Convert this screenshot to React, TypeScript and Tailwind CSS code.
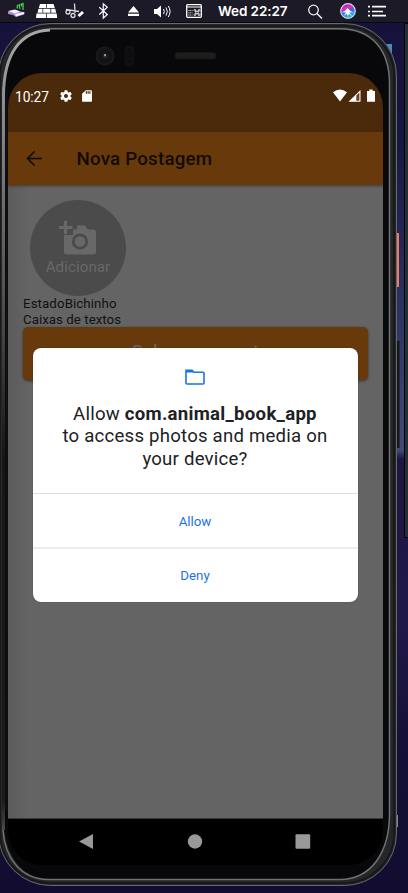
import React from "react";

function MenuBar() {
  return (
    <header className="relative h-[23px] w-full shrink-0 border-b border-[#09070f] bg-[#1c1a27]">
      <svg className="absolute inset-0" width="408" height="22" viewBox="0 0 408 22" fill="none">
        <path d="M8 11.500l7-1.500 10 2.500-1 2-8 2.500-3-2-5-1z" fill="#a58ad6" />
        <path d="M8 11l7-1.500 5 2-5 2z" fill="#f6f2ff" />
        <path d="M15 14l9-2v2l-8 2.500z" fill="#f6f0ff" />
        <path d="M17.500 8.500q-1-3 1-3.500M20 9q-1.500-4 .5-5M23 10V3.500q-2 0-1.500 3" stroke="#3bd34e" strokeWidth="1.300" />
        <path d="M40 4h6.300v4h-7.500zM47 4h6.500l1.300 4H47zM38.500 8.800h4v4h-5zM43.200 8.800h7.200v4h-7.200zM51.200 8.800h4l1 4h-5zM36.500 13.500h9.800v4.500H36zM47 13.500h9.700l.5 4.500H47z" fill="#fff" />
        <g stroke="#d8d8df" strokeWidth="1.300">
          <path d="M74.500 3.500l.5 9.500M66 9.500l13 2" />
          <circle cx="68" cy="12" r="2" />
          <circle cx="73" cy="15.500" r="2" />
          <path d="M78.500 16l4.500-4" stroke="#fff" strokeWidth="3" />
        </g>
        <path d="M99.300 7.300l8 7.200-4 3.500V3.800l4 3.500-8 7.200" stroke="#f5f5f8" strokeWidth="1.250" />
        <path d="M133.500 6l5.500 6.500h-11zM128 13.800h11v2.200h-11z" fill="#fff" />
        <path d="M154 9h3l4-3.500v12l-4-3.500h-3z" fill="#fff" />
        <path d="M163.500 9q1.600 2.500 0 5M166 7.500q2.700 4 0 8M168.300 6q3.500 5.500 0 11" stroke="#fff" strokeWidth="1" />
        <rect x="186.700" y="4.700" width="14.600" height="12.600" rx="1" stroke="#fff" strokeWidth="1.300" />
        <path d="M187 7h14" stroke="#fff" strokeWidth="1" />
        <path d="M188.500 10.500h4M188.500 12.800h4M188.500 15h4" stroke="#fff" strokeWidth="1" strokeDasharray="1 .8" />
        <path d="M195.800 10.800v3.400M198.200 10.800v3.400M195.500 11.300h3M195.500 13.700h3" stroke="#fff" strokeWidth=".8" />
        <g stroke="#fff" strokeWidth=".8"><circle cx="194.900" cy="10.300" r=".9" /><circle cx="199.100" cy="10.300" r=".9" /><circle cx="194.900" cy="14.700" r=".9" /><circle cx="199.100" cy="14.700" r=".9" /></g>
        <circle cx="313.500" cy="10" r="4.800" stroke="#eee" strokeWidth="1.300" />
        <path d="M317 13.500l5 5" stroke="#eee" strokeWidth="1.500" />
        <defs>
          <linearGradient id="orb" x1="345" y1="4" x2="350" y2="18" gradientUnits="userSpaceOnUse">
            <stop stopColor="#7a2bd8" /><stop offset=".3" stopColor="#f02ca0" /><stop offset=".52" stopColor="#2c6fe8" /><stop offset="1" stopColor="#22c7d0" />
          </linearGradient>
        </defs>
        <circle cx="348" cy="11" r="7.300" fill="url(#orb)" stroke="#d9d6e8" strokeWidth="1.200" />
        <path d="M341.500 12.500q4-1 6-4.500q3 4 7 4.500l-5-.2 2.500 4-3.200-2.500-.8 3-1-3-3 2 2-3.500z" fill="#fff" />
        <path d="M368 6.700h2M368 11.500h2M368 15.700h2M372 6.700h14M372 11.500h11M372 15.700h14" stroke="#fff" strokeWidth="1.700" />
      </svg>
      <span className="absolute left-[218px] top-[1px] whitespace-nowrap font-['Inter',sans-serif] text-[13.500px] font-semibold leading-[20px] tracking-[-0.080px] text-white">Wed 22:27</span>
    </header>
  );
}

function StatusBar() {
  return (
    <div className="flex h-[59px] bg-[#4b2a0b] pl-[7px] pr-[6px] text-white">
      <span className="mt-[15px] w-[34px] shrink-0 text-[13.800px] leading-[18px] tracking-[-0.100px]">10:27</span>
      <svg className="ml-[10px] mt-[16px]" width="14" height="14" viewBox="0 0 24 24" fill="currentColor">
        <path d="M19.430 12.980c.04-.32.07-.64.07-.98s-.03-.66-.07-.98l2.110-1.650a.5.500 0 0 0 .12-.64l-2-3.460a.5.500 0 0 0-.61-.22l-2.490 1a7.300 7.300 0 0 0-1.690-.98l-.38-2.650A.5.500 0 0 0 14 2h-4a.5.500 0 0 0-.49.420l-.38 2.650c-.61.250-1.170.590-1.690.980l-2.490-1a.5.500 0 0 0-.61.220l-2 3.460a.5.500 0 0 0 .12.640l2.110 1.650a8 8 0 0 0 0 1.960l-2.110 1.650a.5.500 0 0 0-.12.640l2 3.460c.12.220.39.300.61.220l2.490-1c.52.400 1.080.730 1.690.980l.38 2.650c.03.240.24.420.49.420h4c.25 0 .46-.18.49-.42l.38-2.650c.61-.25 1.170-.59 1.690-.98l2.490 1c.23.090.49 0 .61-.22l2-3.460a.5.500 0 0 0-.12-.64zM12 15.500a3.500 3.500 0 1 1 0-7 3.500 3.500 0 0 1 0 7z" />
      </svg>
      <svg className="ml-[7px] mt-[16px]" width="14" height="14" viewBox="0 0 24 24" fill="currentColor">
        <path d="M18 2h-8L3.500 8v12a2 2 0 0 0 2 2h13a2 2 0 0 0 2-2V4a2 2 0 0 0-2-2zm-6 6h-2V4h2zm3 0h-2V4h2zm3 0h-2V4h2z" />
      </svg>
      <svg className="ml-auto mt-[16px]" width="44" height="14" viewBox="0 0 44 14">
        <path d="M0 3.300Q7-2.500 14 3.300L7 12.500z" fill="white" />
        <path d="M15.500 12.700h12V1z" fill="white" />
        <path d="M23.300 6.500L26.400 3.400V11.700h-3.100z" fill="#65482c" />
        <path d="M36.300 .500h3.400V2H42v10.700h-8V2h2.300z" fill="white" />
      </svg>
    </div>
  );
}

function AppBar() {
  return (
    <div className="relative z-10 flex h-[53px] items-center bg-[#68390b] pl-[17px] text-[#120b05] shadow-[0_1px_3px_rgba(0,0,0,0.4)]">
      <svg width="20" height="20" viewBox="0 0 20 20" fill="none" stroke="currentColor" strokeWidth="1.600">
        <path d="M17 9.500H2.700M9.500 2.500L2.500 9.500l7 7" />
      </svg>
      <h1 className="ml-[31.500px] mt-px text-[18.700px] font-medium leading-6 tracking-[0.230px]">Nova Postagem</h1>
    </div>
  );
}

function Page() {
  return (
    <main className="h-[634px] border-b border-[#383838] bg-[linear-gradient(90deg,#5d5b5b,#646464_20px)] px-[15px] pt-[15px]">
      <div className="ml-[7px] flex h-[96px] w-[96px] flex-col items-center rounded-full bg-[#4b4b4b] text-[#686868]">
        <svg className="ml-[-1px] mt-[20px]" width="38" height="36" viewBox="0 0 38 36">
          <path d="M18 5.500h8l3 4h5q3 0 3 3V32q0 2.500-3 2.500H8q-3 0-3-2.500V15h9V9.500h4z" fill="currentColor" />
          <path d="M7 1v14M.500 7.500h14" stroke="#4b4b4b" strokeWidth="6" />
          <path d="M6.500 1v13M0 7.500h13.500" stroke="currentColor" strokeWidth="3.200" />
          <circle cx="21" cy="21.500" r="6.700" fill="none" stroke="#4b4b4b" strokeWidth="2.800" />
        </svg>
        <span className="mt-[1px] text-[15px] leading-[20px] tracking-[0.120px]">Adicionar</span>
      </div>
      <p className="whitespace-nowrap text-[13.300px] leading-[15.500px] text-[#111]"><span className="tracking-[0.090px]">EstadoBichinho</span><br /><span className="tracking-[0.030px]">Caixas de textos</span></p>
      <button className="mt-[-0.500px] block h-[53px] w-[345px] rounded-[5px] bg-[#68390b] pb-[2px] text-center text-[18.700px] leading-[47px] text-[#686868] shadow-[0_1px_3px_rgba(0,0,0,0.5)]">Salvar novo pet</button>
    </main>
  );
}

function PermissionDialog() {
  return (
    <section role="dialog" className="absolute left-[24.500px] top-[275px] z-20 flex h-[254px] w-[325px] flex-col rounded-[8px] bg-white text-center shadow-[0_0_1px_rgba(0,0,0,0.5)]">
      <div className="flex h-[146px] shrink-0 flex-col items-center border-b border-[#dedede]">
        <svg className="mt-[21px]" width="20" height="16" viewBox="0 0 20 16">
          <path d="M1 1.300h6l2 2h9q1 0 1 1V14q0 1-1 1H2q-1 0-1-1z" fill="none" stroke="#1a73e8" strokeWidth="1.600" />
          <path d="M1 1h6l2.500 2.500H1z" fill="#1a73e8" />
        </svg>
        <p className="mt-[18px] whitespace-nowrap text-[18.600px] leading-[22.300px] tracking-[0.220px] text-[#202124]">
          Allow <b className="font-bold tracking-[0.280px]">com.animal_book_app</b><br />
          to access photos and media on<br />your device?
        </p>
      </div>
      <button className="h-[55px] shrink-0 border-b-2 border-[#ededed] pt-[2px] text-[13.300px] text-[#1a73e8]">Allow</button>
      <button className="h-[53px] pt-px text-[13.300px] text-[#1a73e8]">Deny</button>
    </section>
  );
}

function NavigationBar() {
  return (
    <nav className="flex h-[46px] items-center bg-black pl-[70px] pr-[72px]">
      <svg width="303" height="16" viewBox="0 0 303 16" className="shrink-0" fill="#999">
        <path d="M1 7.500L15 0v15z" />
        <circle cx="117" cy="7.500" r="7.200" />
        <rect x="217.500" y=".200" width="14.700" height="14.600" rx="1" />
      </svg>
    </nav>
  );
}

function Hardware() {
  return (
    <svg className="absolute left-0 top-0" width="408" height="893" viewBox="0 0 408 893" fill="none">
      <defs>
        <linearGradient id="sideShade" x1="0" y1="23" x2="0" y2="886" gradientUnits="userSpaceOnUse">
          <stop stopColor="#aaa" /><stop offset=".12" stopColor="#858585" /><stop offset=".34" stopColor="#4a4a4a" /><stop offset=".5" stopColor="#171717" /><stop offset=".9" stopColor="#1d1b1c" /><stop offset=".97" stopColor="#777" />
        </linearGradient>
        <radialGradient id="lens"><stop stopColor="#3f4650" /><stop offset=".22" stopColor="#17191f" /><stop offset=".55" stopColor="#101012" /><stop offset="1" stopColor="#1b1b1a" /></radialGradient>
      </defs>
      <path d="M386 44h6v13l-3-2z" fill="#458dbe" />
      <rect x="404.500" y="23.500" width="7" height="514" fill="#23303a" stroke="#050609" />
      <rect x="395" y="233" width="4" height="54" fill="#f17b61" />
      <rect x="395" y="341" width="4.500" height="107" fill="#171717" />
      <path d="M397.500 815v12" stroke="#858585" />
      <rect x="-1.500" y="23.500" width="398" height="862" rx="52" fill="#252627" stroke="#686868" />
      <rect x="0" y="26" width="394" height="857" rx="50" stroke="#151617" strokeWidth="1.500" />
      <path d="M50 29.500H340C372 30 389 52 389.500 82V815C389 852 372 879 340 879.500H48C20 879 4 852 3.500 820V90C4 54 20 30 50 29.500Z" fill="#08080a" />
      <path d="M3.500 830V95C4 54 20 31 50 30" stroke="url(#sideShade)" strokeWidth="3" />
      <path d="M50 28.800H340C372 29 389 50 389.500 82V815C389 852 372 879 340 879.500H48C22 879 5 860 3 830" stroke="#707173" strokeWidth="1.500" />
      <path d="M6.500 90V810" stroke="#101115" strokeWidth="2" />
      <circle cx="105" cy="56" r="9.500" fill="url(#lens)" />
      <circle cx="105" cy="55" r="1" fill="#aab8ca" />
      <rect x="125" y="46" width="9" height="20" rx="4" fill="#0d0d0d" stroke="#131313" />
      <circle cx="129.500" cy="50" r="3" stroke="#151515" />
      <circle cx="129.500" cy="61" r="3" stroke="#151515" />
      <rect x="175" y="52.500" width="41" height="6.500" rx="3" fill="#1d1d1d" stroke="#151515" />
    </svg>
  );
}

export default function App() {
  return (
    <div className="relative flex h-[893px] w-[408px] flex-col overflow-hidden bg-[linear-gradient(180deg,#15113a_0px,#171541_130px,#282e5e_280px,#414a76_450px,#1d1642_459px,#20194a_620px,#151037_740px,#110c30_893px)] font-['Roboto',sans-serif]">
      <Hardware />
      <MenuBar />
      <div className="relative ml-[8px] mt-[50px] w-[375px] overflow-hidden rounded-[34px]">
        <StatusBar />
        <AppBar />
        <Page />
        <PermissionDialog />
        <NavigationBar />
      </div>
    </div>
  );
}
